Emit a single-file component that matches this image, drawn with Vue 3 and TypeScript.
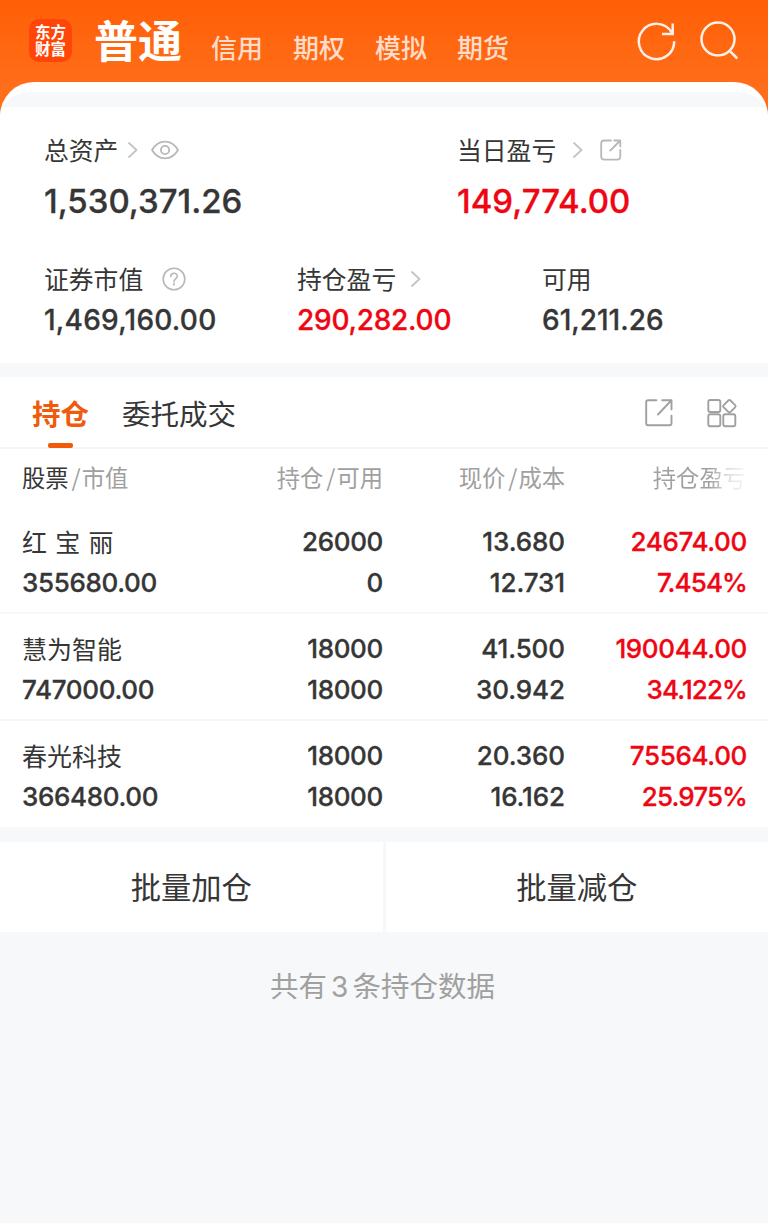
<script setup lang="ts">
interface Holding {
  name: string
  value: string
  amount: string
  available: string
  price: string
  cost: string
  profit: string
  rate: string
  spaced?: boolean
}

const accounts: string[] = ['信用', '期权', '模拟', '期货']

const holdings: Holding[] = [
  { name: '红宝丽', value: '355680.00', amount: '26000', available: '0', price: '13.680', cost: '12.731', profit: '24674.00', rate: '7.454%', spaced: true },
  { name: '慧为智能', value: '747000.00', amount: '18000', available: '18000', price: '41.500', cost: '30.942', profit: '190044.00', rate: '34.122%' },
  { name: '春光科技', value: '366480.00', amount: '18000', available: '18000', price: '20.360', cost: '16.162', profit: '75564.00', rate: '25.975%' },
]
</script>

<template>
  <div class="page">
    <header class="top">
      <div class="logo">东方<br>财富</div>
      <div class="current">普通</div>
      <nav class="accounts">
        <span v-for="a in accounts" :key="a">{{ a }}</span>
      </nav>
      <svg class="refresh" width="44" height="44" viewBox="0 0 44 44">
        <path d="M39.2 22.2A17.7 17.7 0 1 1 36.600 13.300M37.700 4.600V15H27" />
      </svg>
      <svg class="search" width="44" height="44" viewBox="0 0 44 44">
        <circle cx="21" cy="20" r="16.500" /><path d="M32.300 31.500L40.300 39.500" />
      </svg>
    </header>

    <main class="sheet">
      <div class="strip"></div>
      <section class="assets">
        <div class="row main-row">
          <div class="cell">
            <div class="label"><span>总资产</span>
              <svg class="chev" width="10" height="16" viewBox="0 0 10 16"><path d="M1 1L8.500 8L1 15" /></svg>
              <svg class="eye" width="28" height="20" viewBox="0 0 28 20">
                <path d="M1 10C7.500-1.200 20.500-1.200 27 10C20.500 21.200 7.500 21.200 1 10Z" /><circle cx="14" cy="10" r="4.100" />
              </svg>
            </div>
            <div class="big">1,530,371.26</div>
          </div>
          <div class="cell">
            <div class="label"><span>当日盈亏</span>
              <svg class="chev wide" width="10" height="16" viewBox="0 0 10 16"><path d="M1 1L8.500 8L1 15" /></svg>
              <svg class="share" width="22" height="22" viewBox="0 0 22 22">
                <path d="M11 1.500H4.500Q1.200 1.500 1.200 4.800V17.400Q1.200 20.600 4.500 20.600H17Q20.300 20.600 20.300 17.400V11M14.200 1.500H20.300V7.600M20.300 1.500L10.300 11.500" />
              </svg>
            </div>
            <div class="big red">149,774.00</div>
          </div>
        </div>
        <div class="row sub-row">
          <div class="cell">
            <div class="label"><span>证券市值</span>
              <svg class="help" width="24" height="24" viewBox="0 0 24 24">
                <circle cx="12" cy="12" r="10.800" /><path d="M8.800 9.600C8.800 5.200 15.300 5.200 15.300 9.300C15.300 11.700 12 11.800 12 14.600M12 16.300V18" />
              </svg>
            </div>
            <div class="mid loose">1,469,160.00</div>
          </div>
          <div class="cell">
            <div class="label"><span>持仓盈亏</span>
              <svg class="chev near" width="10" height="16" viewBox="0 0 10 16"><path d="M1 1L8.500 8L1 15" /></svg>
            </div>
            <div class="mid tight red">290,282.00</div>
          </div>
          <div class="cell">
            <div class="label"><span>可用</span></div>
            <div class="mid">61,211.26</div>
          </div>
        </div>
      </section>

      <div class="gap"></div>

      <section class="tabs">
        <div class="tab active">持仓</div>
        <div class="tab">委托成交</div>
        <svg class="export" width="30" height="30" viewBox="0 0 30 30">
          <path d="M12.400 2.200H4Q2.200 2.200 2.200 4V25.200Q2.200 27.200 4 27.200H25.500Q27.500 27.200 27.500 25.200V17.600M18.300 2.200H27.500V11.400M27.500 2.200L14 16.500" />
        </svg>
        <svg class="grid-icon" width="32" height="32" viewBox="0 0 32 32">
          <rect x="2.300" y="3" width="12" height="12" rx="2" /><rect x="2.300" y="17.300" width="12" height="12" rx="2" /><rect x="17.300" y="17.300" width="12" height="12" rx="2" />
          <path d="M22.300 3.500Q23.400 2.400 24.500 3.500L29.100 8.100Q30.200 9.200 29.100 10.300L24.500 14.900Q23.400 16 22.300 14.900L17.700 10.300Q16.600 9.200 17.700 8.100Z" />
        </svg>
      </section>

      <section class="table">
        <div class="thead grid">
          <span><b>股票</b><i>/</i>市值</span>
          <span>持仓<i>/</i>可用</span>
          <span>现价<i>/</i>成本</span>
          <span class="fade">持仓盈亏</span>
        </div>
        <div v-for="h in holdings" :key="h.name" class="holding">
          <div class="grid line">
            <span class="name" :class="{ spaced: h.spaced }">{{ h.name }}</span>
            <span>{{ h.amount }}</span><span class="price">{{ h.price }}</span><span class="red">{{ h.profit }}</span>
          </div>
          <div class="grid line lower">
            <span>{{ h.value }}</span>
            <span>{{ h.available }}</span><span class="price">{{ h.cost }}</span><span class="red rate">{{ h.rate }}</span>
          </div>
        </div>
      </section>

      <div class="actions">
        <div class="action">批量加仓</div>
        <div class="action">批量减仓</div>
      </div>
      <p class="summary">共有<em>3</em>条持仓数据</p>
    </main>
  </div>
</template>

<style>
body { margin: 0; background: #f6f8fa; }
</style>

<style scoped>
.page {
  width: 768px;
  height: 1224px;
  box-sizing: border-box;
  overflow: hidden;
  border-bottom: 1px solid #fdfdfe;
  background: linear-gradient(#ff5f06 0, #ff6e1a 88px, #ff6e1a 100%);
  font-family: "Noto Sans CJK SC", sans-serif;
  color: #363636;
}
svg { fill: none; flex: none; stroke-linejoin: round; stroke-linecap: round; }
.top { height: 82px; display: flex; align-items: flex-start; }
.logo {
  width: 43px; height: 43px; box-sizing: border-box; padding-top: 4px; margin: 19px 0 0 29px;
  border-radius: 10px; background: #ff4608; color: #fff; text-align: center;
  font-size: 15.5px; line-height: 17px; font-weight: 700;
}
.current { margin: 7px 0 0 22px; width: 90px; font-size: 44px; line-height: 64px; font-weight: 700; color: #fff; white-space: nowrap; }
.accounts { display: flex; margin: 27px 0 0 27px; color: #ffdcca; font-size: 26px; line-height: 40px; font-weight: 500; }
.accounts span { width: 82px; white-space: nowrap; }
.refresh, .search { stroke: #fff0e8; stroke-width: 2.5; stroke-linecap: butt; stroke-linejoin: miter; }
.refresh { margin: 19px 0 0 96px; }
.search { margin: 19px 0 0 18px; }

.sheet { height: 1141px; background: #f6f8fa; border-radius: 34px 34px 0 0; overflow: hidden; border-top: 10px solid #fff; box-sizing: border-box; }
.strip { height: 15px; background: #f6f8fa; }
.assets { height: 256px; background: #fff; box-sizing: border-box; padding: 25px 0 0 44px; }
.row { display: grid; }
.main-row { grid-template-columns: 413px 1fr; height: 129px; }
.sub-row { grid-template-columns: 253px 245px 1fr; }
.label { display: flex; align-items: center; height: 36px; font-size: 24.8px; white-space: nowrap; }
.label span { padding-bottom: 2px; }
.big { font: 500 33px/40px Inter, sans-serif; margin-top: 13px; }
.mid { font: 500 28px/36px Inter, sans-serif; margin-top: 5px; }
.mid.loose { letter-spacing: 0.25px; }
.mid.tight { letter-spacing: -0.25px; }
.big, .mid { -webkit-text-stroke: 0.3px currentColor; }
.red { color: #ef0613; }
.chev { stroke: #c4c4c4; stroke-width: 1.8; margin-left: 10px; }
.chev.wide { margin-left: 17px; }
.chev.near { margin-left: 15px; }
.eye { stroke: #b8b8b8; stroke-width: 1.8; margin-left: 13px; }
.share { stroke: #b8b8b8; stroke-width: 1.8; margin-left: 17px; }
.help { stroke: #b8b8b8; stroke-width: 1.6; margin-left: 18.5px; }
.gap { height: 14px; }

.tabs { height: 72px; box-sizing: border-box; background: #fff; border-bottom: 2px solid #f6f6f7; display: flex; padding-left: 32px; }
.tab { font-size: 28.500px; line-height: 72px; margin-right: 33px; position: relative; white-space: nowrap; }
.tab.active { color: #f05a0a; font-weight: 700; }
.tab.active::after { content: ""; position: absolute; left: 16px; bottom: -1px; width: 25px; height: 5px; border-radius: 2px; background: #f05a0a; }
.export { stroke: #a0a0a0; stroke-width: 1.9; margin: 21px 32px 0 auto; }
.grid-icon { stroke: #a0a0a0; stroke-width: 1.9; margin: 20px 30px 0 0; }

.table { background: #fff; }
.grid { display: grid; grid-template-columns: 180px 181px 182px 182px; padding-left: 22px; text-align: right; white-space: nowrap; }
.grid > :first-child { text-align: left; }
.thead { height: 58px; line-height: 57px; font-size: 23.300px; color: #a0a0a0; }
.thead b { color: #363636; font-weight: 400; }
.thead i { font-style: normal; padding: 0 1px 0 3px; }
.thead .fade { color: transparent; background: linear-gradient(90deg, #a0a0a0 80%, #dedede 90%, #f6f6f6 100%); background-clip: text; margin-right: 1px; margin-left: -1px; }
.holding { height: 107px; box-sizing: border-box; padding-top: 15px; border-bottom: 2px solid #f7f7f8; }
.holding:last-child { height: 106px; border-bottom: 0; }
.line { height: 40.500px; line-height: 40.500px; font-family: Inter, sans-serif; font-size: 26px; font-weight: 500; letter-spacing: -0.350px; -webkit-text-stroke: 0.300px currentColor; }
.lower { line-height: 39px; }
.price { letter-spacing: -0.1px; }
.rate { letter-spacing: -0.900px; }
.name { font-family: "Noto Sans CJK SC", sans-serif; font-size: 25px; line-height: 38px; font-weight: 400; letter-spacing: 0; -webkit-text-stroke: 0; }
.name.spaced { letter-spacing: 8.300px; }

.actions { margin-top: 15px; height: 90px; display: grid; grid-template-columns: 1fr 1fr; gap: 3px; }
.action { background: #fff; text-align: center; font-size: 30.300px; line-height: 89px; }
.summary { margin: 33px 3px 0 0; text-align: center; color: #a0a0a0; font-size: 28.500px; line-height: 40px; }
.summary em { font: 400 28px/40px Inter, sans-serif; padding: 0 4px; }
</style>
